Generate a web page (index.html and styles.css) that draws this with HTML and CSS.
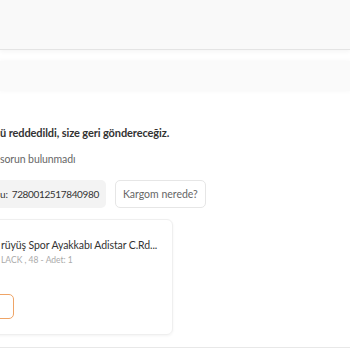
FILE: index.html
```html
<!DOCTYPE html>
<html lang="tr">
<head>
<meta charset="UTF-8">
<meta name="viewport" content="width=device-width, initial-scale=1.0">
<title>Sipariş Detayı</title>
<link rel="stylesheet" href="styles.css">
</head>
<body>
  <div class="top-bar"></div>
  <div class="sub-bar"></div>

  <section class="order-status">
    <p class="status-title">ü reddedildi, size geri göndereceğiz.</p>
    <p class="status-note">sorun bulunmadı</p>

    <div class="tracking-row">
      <span class="tracking-no">u: <span class="tracking-code">7280012517840980</span></span>
      <button class="cargo-btn">Kargom nerede?</button>
    </div>

    <div class="product-card">
      <p class="product-name">rüyüş Spor Ayakkabı Adistar C.Rd...</p>
      <p class="product-meta">LACK , 48 - Adet: 1</p>
      <button class="review-btn"></button>
    </div>
  </section>

  <div class="divider"></div>
</body>
</html>
```

FILE: styles.css
```css
body {
  font-family: 'Lato', 'Noto Sans', sans-serif;
  margin: 0;
  background-color: #fff;
  color: #333;
  overflow: hidden;
}

p {
  margin: 0;
}

.top-bar {
  height: 49px;
  background-color: #f9f9f9;
  border-bottom: 1px solid #e4e4e4;
  box-shadow: 0 2px 4px rgba(0, 0, 0, 0.04);
}

.sub-bar {
  height: 30px;
  margin-top: 11px;
  background-color: #fafafa;
  box-shadow: 0 0 5px rgba(0, 0, 0, 0.04);
}

.order-status {
  padding-top: 33px;
}

.status-title {
  font-size: 11px;
  font-weight: bold;
  line-height: 18px;
  letter-spacing: -0.1px;
  color: #333;
}

.status-note {
  margin-top: 8px;
  font-size: 10.5px;
  line-height: 18px;
  letter-spacing: -0.1px;
  color: #666;
}

.tracking-row {
  display: flex;
  gap: 9px;
  margin-top: 12px;
  margin-left: -20px;
}

.tracking-no {
  display: flex;
  align-items: center;
  height: 28px;
  padding: 0 7px 0 20px;
  background-color: #f3f3f3;
  border-radius: 5px;
  font-size: 10px;
  letter-spacing: -0.2px;
}

.tracking-code {
  margin-left: 4px;
  letter-spacing: -0.35px;
}

.cargo-btn {
  height: 28px;
  padding: 0 7px;
  background-color: #fff;
  border: 1px solid #e6e6e6;
  border-radius: 5px;
  color: #666;
  font-family: inherit;
  font-size: 10.5px;
}

.product-card {
  width: 171px;
  margin: 11px 0 0 -20px;
  padding: 16px 0 15px 20px;
  border: 1px solid #efefef;
  border-radius: 6px;
  box-shadow: 0 1px 3px rgba(0, 0, 0, 0.05);
}

.product-name {
  font-size: 10.5px;
  line-height: 18px;
  letter-spacing: -0.1px;
  white-space: nowrap;
  color: #333;
}

.product-meta {
  margin-top: -2px;
  font-size: 8.5px;
  line-height: 16px;
  color: #aaa;
}

.review-btn {
  display: block;
  width: 34px;
  height: 25px;
  margin: 26px 0 0 -21px;
  background-color: #fff;
  border: 1px solid #efa466;
  border-radius: 5px;
}

.divider {
  margin-top: 12px;
  border-top: 1px solid #e8e8e8;
}
```
